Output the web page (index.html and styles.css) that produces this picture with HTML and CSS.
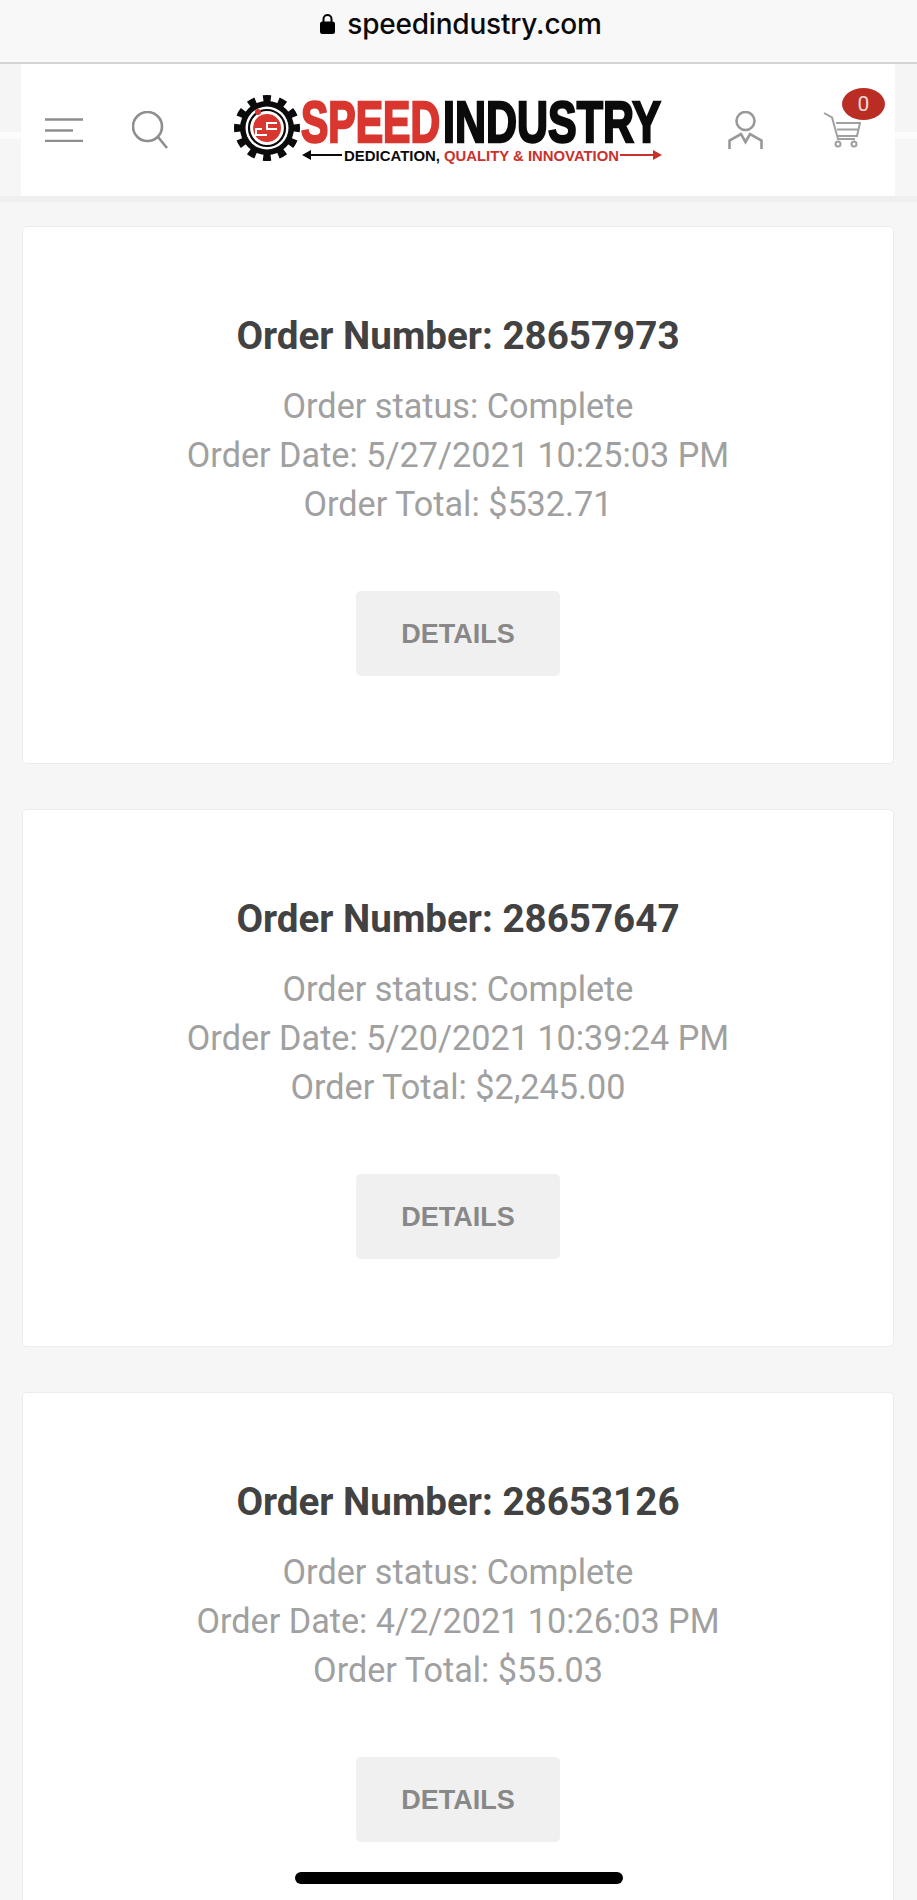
FILE: index.html
```html
<!DOCTYPE html>
<html lang="en">
<head>
<meta charset="utf-8">
<title>Orders - Speed Industry</title>
<link rel="stylesheet" href="styles.css">
</head>
<body>
<div class="address-bar">
  <svg class="lock" viewBox="0 0 15 21"><path d="M3.5 9V6a4 4 0 0 1 8 0v3" fill="none" stroke="#000" stroke-width="2"/><rect x="0" y="8.5" width="15" height="12.5" rx="2.5" fill="#000"/></svg>
  <span class="url">speedindustry.com</span>
</div>
<div class="header-band">
  <header class="site-header">
    <svg class="icon icon-menu" viewBox="0 0 38 24"><path d="M0 1.5H38M0 12.5H28M0 23H38"/></svg>
    <svg class="icon icon-search" viewBox="0 0 36 38"><circle cx="15.5" cy="15.5" r="14.5"/><path d="M26 26L35 37"/></svg>
    <svg class="logo" viewBox="232 85 433 90" role="img" aria-label="Speed Industry">
      <circle cx="267" cy="128" r="29" fill="none" stroke="#0b0b0b" stroke-width="8" pathLength="120" stroke-dasharray="5 5" stroke-dashoffset="2.5"/>
      <circle cx="267" cy="128" r="27" fill="#0b0b0b"/>
      <circle cx="267" cy="128" r="21.5" fill="#fff"/>
      <circle cx="267" cy="128" r="18" fill="none" stroke="#0b0b0b" stroke-width="2.2"/>
      <circle cx="267" cy="128" r="14" fill="#d9362f"/>
      <circle cx="258" cy="112" r="3" fill="#d9362f"/>
      <path d="M277 123H267V129H277M267 135H256V129H262" fill="none" stroke="#fff" stroke-width="2"/>
      <text class="logo-big logo-red" x="301" y="142" textLength="139" lengthAdjust="spacingAndGlyphs">SPEED</text>
      <text class="logo-big logo-black" x="443" y="142" textLength="218" lengthAdjust="spacingAndGlyphs">INDUSTRY</text>
      <path d="M310 155H342" stroke="#0b0b0b" stroke-width="2"/><path d="M302 155L311 150V160Z" fill="#0b0b0b"/>
      <text class="logo-tag logo-black" x="344" y="161" textLength="96" lengthAdjust="spacingAndGlyphs">DEDICATION,</text>
      <text class="logo-tag logo-darkred" x="444" y="161" textLength="175" lengthAdjust="spacingAndGlyphs">QUALITY &amp; INNOVATION</text>
      <path d="M620 155H655" stroke="#c9322c" stroke-width="2"/><path d="M662 155L653 150V160Z" fill="#c9322c"/>
    </svg>
    <svg class="icon icon-user" viewBox="0 0 35 38"><circle cx="17.5" cy="10" r="9"/><path d="M1.5 38V29.5L13 23L17.5 31L22 23L33.5 29.5V38"/></svg>
    <div class="cart">
      <svg class="icon icon-cart" viewBox="0 0 38 36"><path d="M1 1L9 5.500L15 27H32M13 11H37L34 24H15M14 17.500H36"/><circle cx="15" cy="32" r="2.500"/><circle cx="31" cy="32" r="2.500"/></svg>
      <span class="badge">0</span>
    </div>
  </header>
</div>
<main class="orders">
  <article class="card">
    <h2 class="order-number">Order Number: 28657973</h2>
    <p class="order-meta">Order status: Complete<br>Order Date: 5/27/2021 10:25:03 PM<br>Order Total: $532.71</p>
    <a class="details" href="#">DETAILS</a>
  </article>
  <article class="card">
    <h2 class="order-number">Order Number: 28657647</h2>
    <p class="order-meta">Order status: Complete<br>Order Date: 5/20/2021 10:39:24 PM<br>Order Total: $2,245.00</p>
    <a class="details" href="#">DETAILS</a>
  </article>
  <article class="card">
    <h2 class="order-number">Order Number: 28653126</h2>
    <p class="order-meta">Order status: Complete<br>Order Date: 4/2/2021 10:26:03 PM<br>Order Total: $55.03</p>
    <a class="details" href="#">DETAILS</a>
  </article>
</main>
<div class="home-indicator"></div>
</body>
</html>
```
FILE: styles.css
```css
* { box-sizing: border-box; }
html, body { height: 1900px; }
body {
  margin: 0;
  overflow: hidden;
  background: #f6f6f6;
  font-family: Roboto, "Liberation Sans", sans-serif;
}
.address-bar {
  height: 64px;
  display: flex;
  align-items: center;
  justify-content: center;
  gap: 12px;
  padding: 0 0 15px 5px;
  background: #f8f8f8;
  border-bottom: 2px solid #d4d4d4;
}
.lock { width: 15px; height: 21px; }
.url {
  font-family: Inter, "Liberation Sans", sans-serif;
  font-size: 28px;
  font-weight: 500;
  color: #0a0a0a;
  letter-spacing: -0.2px;
}
.header-band {
  padding: 0 22px 0 21px;
  border-bottom: 6px solid #efefef;
  background: linear-gradient(#f5f5f5 0, #f5f5f5 68px, #fcfcfc 68px, #fcfcfc 75px, #f6f6f6 75px);
}
.site-header {
  position: relative;
  height: 132px;
  display: flex;
  align-items: center;
  background: #fff;
}
.icon {
  flex: none;
  fill: none;
  stroke: #8e8e8e;
  stroke-width: 2.6;
}
.icon-menu { width: 38px; height: 24px; margin: 0 0 0 24px; }
.icon-search { width: 36px; height: 38px; margin: 0 0 0 49px; }
.logo { flex: none; width: 433px; height: 90px; margin: 0 0 0 64px; }
.logo-big {
  font-family: "Liberation Sans", sans-serif;
  font-weight: 700;
  font-size: 58px;
  stroke-width: 2.4px;
}
.logo-tag {
  font-family: "Liberation Sans", sans-serif;
  font-weight: 700;
  font-size: 15.5px;
}
.logo-red { fill: #d9362f; stroke: #d9362f; }
.logo-black { fill: #0b0b0b; stroke: #0b0b0b; }
.logo-tag.logo-black { stroke: none; }
.logo-darkred { fill: #c9322c; }
.icon-user { width: 35px; height: 38px; margin: 0 0 0 63px; stroke: #999; }
.cart { position: relative; margin: 0 0 0 60px; display: flex; }
.icon-cart { width: 38px; height: 36px; stroke: #a0a0a0; stroke-width: 2; }
.badge {
  position: absolute;
  left: 19px;
  top: -24px;
  width: 43px;
  height: 32px;
  border-radius: 50%;
  background: #b92d25;
  color: #f4d9d7;
  font-size: 21px;
  line-height: 32px;
  text-align: center;
}
.orders {
  display: flex;
  flex-direction: column;
  gap: 45px;
  padding: 24px 23px 0 22px;
}
.card {
  flex: none;
  display: flex;
  flex-direction: column;
  align-items: center;
  height: 538px;
  padding-top: 86px;
  background: #fff;
  border: 1px solid #ececec;
  border-radius: 5px;
  text-align: center;
}
.order-number {
  margin: 0;
  font-size: 38.6px;
  line-height: 46px;
  font-weight: 700;
  color: #424242;
}
.order-meta {
  margin: 23px 0 0;
  font-size: 34.2px;
  line-height: 49px;
  font-weight: 400;
  color: #a0a0a0;
}
.details {
  margin-top: 62px;
  width: 204px;
  height: 85px;
  border-radius: 5px;
  background: #f0f0f0;
  color: #888;
  font-family: "Liberation Sans", sans-serif;
  font-size: 27px;
  font-weight: 700;
  line-height: 87px;
  text-decoration: none;
}
.home-indicator {
  position: fixed;
  left: 295px;
  top: 1872px;
  width: 328px;
  height: 12px;
  border-radius: 6px;
  background: #000;
}
```
